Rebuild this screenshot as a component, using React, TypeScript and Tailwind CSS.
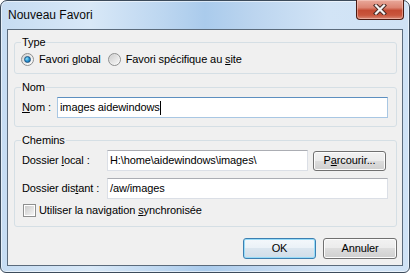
import React from "react";

function Radio({ checked }: { checked?: boolean }) {
  return (
    <span className="w-[13px] h-[13px] shrink-0 rounded-full border border-[#8e8f8f] bg-[linear-gradient(135deg,#cfcfcf_0%,#f0f0f0_60%,#fdfdfd_100%)] flex items-center justify-center">
      {checked ? (
        <span className="w-[7px] h-[7px] rounded-full border border-[#1c5380] bg-[radial-gradient(circle_at_35%_35%,#8ee4fb_0%,#2a95d4_50%,#0f5a98_100%)]" />
      ) : (
        <span className="w-[9px] h-[9px] rounded-full bg-[linear-gradient(135deg,#d0d0d0,#f6f6f6)]" />
      )}
    </span>
  );
}

function Group({
  label,
  className,
  children,
}: {
  label: string;
  className: string;
  children: React.ReactNode;
}) {
  return (
    <div className={"relative border border-[#d5dfe5] rounded-[3px] " + className}>
      <span className="absolute left-[6px] top-[-8px] px-[1px] bg-[#f0f0f0] leading-[15px]">
        {label}
      </span>
      {children}
    </div>
  );
}

function Field({
  className,
  children,
  focused,
}: {
  className: string;
  children?: React.ReactNode;
  focused?: boolean;
}) {
  return (
    <div
      className={
        (focused
          ? "border-[#a9c7e3] border-t-[#5d8fc0] "
          : "border-[#dbdfe6] border-t-[#abadb3] ") +
        "h-[21px] bg-white border flex items-center pl-[2px] leading-[15px] whitespace-nowrap " +
        className
      }
    >
      {children}
    </div>
  );
}

export default function App() {
  return (
    <div className="w-[410px] h-[273px] font-['Liberation_Sans',Arial,sans-serif] text-[11px] tracking-[-0.1px] text-black">
      <div className="w-[410px] h-[273px] rounded-t-[7px] rounded-b-[6px] border border-[#3c4b5b] bg-[linear-gradient(90deg,#c6dcf2_0%,#d8e8f7_22%,#bcd6f0_40%,#aacbec_50%,#bcd5ef_62%,#d2e4f6_80%,#cfe2f5_100%)] shadow-[inset_0_0_0_1px_rgba(255,255,255,0.55)] flex flex-col">
        <div className="h-[28px] relative flex items-start">
          <span className="ml-[7px] mt-[7px] text-[12px] tracking-normal leading-[15px] text-[#0a0a0a]">
            Nouveau Favori
          </span>
          <div className="absolute right-[5px] top-[-1px] w-[48px] h-[20px] rounded-b-[4px] border border-[#4a1a12] border-t-0 bg-[linear-gradient(#e9a99b_0%,#dc8472_40%,#c44b33_55%,#c9563d_80%,#d98a77_100%)] shadow-[inset_0_0_0_1px_rgba(255,220,210,0.45)] flex items-center justify-center">
            <svg width="14" height="11" viewBox="0 0 14 11">
              <path d="M3 1.5 L11 9.5 M11 1.5 L3 9.5" stroke="#4a2a24" strokeWidth="4.2" strokeLinecap="square" />
              <path d="M3 1.5 L11 9.5 M11 1.5 L3 9.5" stroke="#f4f4f4" strokeWidth="2.2" strokeLinecap="square" />
            </svg>
          </div>
        </div>

        <div className="ml-[6px] w-[396px] h-[237px] border border-[#5b6b7c] bg-[#f0f0f0] flex flex-col pl-[6px] pr-[5px]">
          <Group label="Type" className="mt-[12px] pt-[9px] pb-[6px] pl-[6px]">
            <div className="h-[15px] flex items-center leading-[15px]">
              <Radio checked />
              <span className="ml-[5px]">
                Favori <span className="underline">g</span>lobal
              </span>
              <span className="ml-[7px]">
                <Radio />
              </span>
              <span className="ml-[5px]">
                Favori spécifique au <span className="underline">s</span>ite
              </span>
            </div>
          </Group>

          <Group label="Nom" className="mt-[13px] pt-[9px] pb-[8px] pl-[7px] pr-[8px]">
            <div className="flex items-center">
              <span className="w-[35px] shrink-0 leading-[15px]">
                <span className="underline">N</span>om :
              </span>
              <Field className="flex-1" focused>
                images aidewindows
                <span className="inline-block w-[1px] h-[14px] bg-black" />
              </Field>
            </div>
          </Group>

          <Group label="Chemins" className="mt-[13px] pt-[9px] pb-[8px] pl-[7px] pr-[8px]">
            <div className="flex items-center">
              <span className="w-[85px] shrink-0 leading-[15px]">
                Dossier <span className="underline">l</span>ocal :
              </span>
              <Field className="w-[201px]">H:\home\aidewindows\images\</Field>
              <button className="ml-[5px] w-[73px] h-[20px] rounded-[3px] border border-[#707070] bg-[linear-gradient(#f2f2f2_0%,#ebebeb_50%,#dddddd_50%,#cfcfcf_100%)] shadow-[inset_0_0_0_1px_#fcfcfc] leading-[15px]">
                P<span className="underline">a</span>rcourir...
              </button>
            </div>
            <div className="flex items-center mt-[7px]">
              <span className="w-[85px] shrink-0 leading-[15px]">
                Dossier dis<span className="underline">t</span>ant :
              </span>
              <Field className="flex-1">/aw/images</Field>
            </div>
            <div className="flex items-center mt-[4px] h-[15px] pl-[1px]">
              <span className="w-[13px] h-[13px] shrink-0 border border-[#8e8f8f] bg-white flex items-center justify-center">
                <span className="w-[9px] h-[9px] bg-[linear-gradient(135deg,#cbcbcb,#f4f4f4)]" />
              </span>
              <span className="ml-[3px] leading-[15px]">
                Utiliser la navigation <span className="underline">s</span>ynchronisée
              </span>
            </div>
          </Group>

          <div className="mt-[11px] flex justify-end gap-[7px]">
            <button className="w-[73px] h-[21px] rounded-[3px] border border-[#3c7fb1] bg-[linear-gradient(#f4f8fb_0%,#eaf1f7_50%,#dbe6ef_50%,#d0dde8_100%)] shadow-[inset_0_0_0_1px_#98dcf8] leading-[15px]">
              OK
            </button>
            <button className="w-[74px] h-[21px] rounded-[3px] border border-[#707070] bg-[linear-gradient(#f2f2f2_0%,#ebebeb_50%,#dddddd_50%,#cfcfcf_100%)] shadow-[inset_0_0_0_1px_#fcfcfc] leading-[15px]">
              Annuler
            </button>
          </div>
        </div>
      </div>
    </div>
  );
}
